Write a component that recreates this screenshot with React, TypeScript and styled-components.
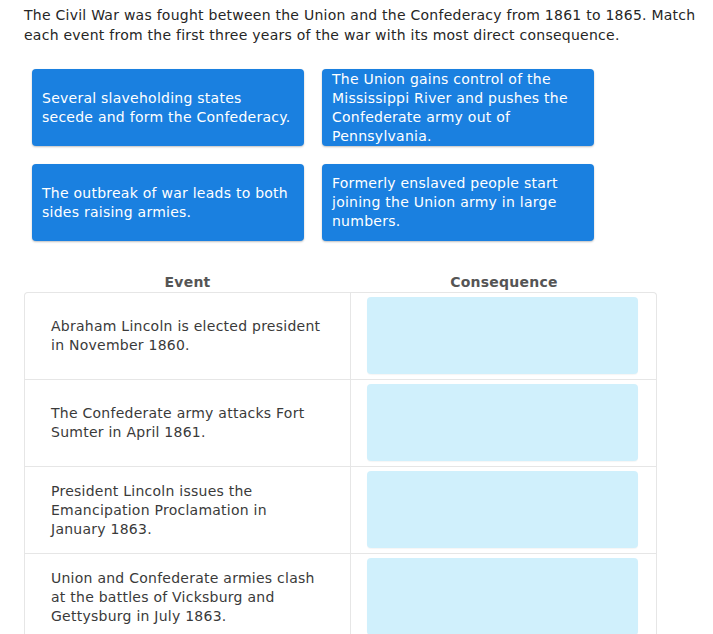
import styled, { createGlobalStyle } from "styled-components";

const GlobalStyle = createGlobalStyle`
  body {
    margin: 0;
    background: #fff;
    font-family: "DejaVu Sans", Verdana, sans-serif;
    letter-spacing: 0.25px;
  }
`;

const Page = styled.div`
  padding: 5px 0 0 24px;
  font-size: 14px;
  line-height: 20px;
  color: #262626;
`;

const Prompt = styled.p`
  margin: 0;
  width: 682px;
`;

const TileGrid = styled.div`
  display: grid;
  grid-template-columns: 272px 272px;
  column-gap: 18px;
  row-gap: 18px;
  margin: 24px 0 0 8px;
`;

const Tile = styled.div`
  display: flex;
  align-items: center;
  height: 77px;
  box-sizing: border-box;
  padding: 0 10px;
  background: #1a80e0;
  border-radius: 4px;
  box-shadow: 0 1px 2px rgba(0, 0, 0, 0.25);
  color: #fff;
  line-height: 19px;
`;

const Table = styled.div`
  width: 633px;
  margin-top: 32px;
`;

const HeadRow = styled.div`
  display: grid;
  grid-template-columns: 327px 306px;
  line-height: 19px;
`;

const HeadCell = styled.div`
  text-align: center;
  font-weight: bold;
  color: #555;
`;

const Body = styled.div`
  border: 1px solid #e6e6e6;
  border-bottom: none;
  border-radius: 4px 4px 0 0;
`;

const Row = styled.div`
  display: grid;
  grid-template-columns: 326px 305px;
  border-bottom: 1px solid #e6e6e6;
`;

const EventCell = styled.div`
  display: flex;
  align-items: center;
  padding: 0 28px 0 26px;
  border-right: 1px solid #e6e6e6;
  color: #3a3a3a;
  line-height: 19px;
`;

const DropCell = styled.div`
  padding: 4px 18px 5px 16px;
`;

const DropZone = styled.div`
  height: 77px;
  background: #d0f0fc;
  border-radius: 4px;
  box-shadow: 0 1px 1px rgba(0, 0, 0, 0.04);
`;

const tiles = [
  "Several slaveholding states secede and form the Confederacy.",
  "The Union gains control of the Mississippi River and pushes the Confederate army out of Pennsylvania.",
  "The outbreak of war leads to both sides raising armies.",
  "Formerly enslaved people start joining the Union army in large numbers.",
];

const events = [
  "Abraham Lincoln is elected president in November 1860.",
  "The Confederate army attacks Fort Sumter in April 1861.",
  "President Lincoln issues the Emancipation Proclamation in January 1863.",
  "Union and Confederate armies clash at the battles of Vicksburg and Gettysburg in July 1863.",
];

export default function App() {
  return (
    <>
      <GlobalStyle />
      <Page>
        <Prompt>
          The Civil War was fought between the Union and the Confederacy from
          1861 to 1865. Match each event from the first three years of the war
          with its most direct consequence.
        </Prompt>
        <TileGrid>
          {tiles.map((t) => (
            <Tile key={t}>{t}</Tile>
          ))}
        </TileGrid>
        <Table>
          <HeadRow>
            <HeadCell>Event</HeadCell>
            <HeadCell>Consequence</HeadCell>
          </HeadRow>
          <Body>
            {events.map((e) => (
              <Row key={e}>
                <EventCell>{e}</EventCell>
                <DropCell>
                  <DropZone />
                </DropCell>
              </Row>
            ))}
          </Body>
        </Table>
      </Page>
    </>
  );
}
